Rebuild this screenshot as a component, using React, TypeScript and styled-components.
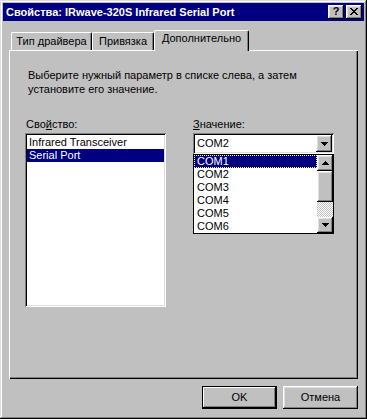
import React from "react";
import styled, { createGlobalStyle } from "styled-components";

const GlobalStyle = createGlobalStyle`
  html, body {
    margin: 0;
    padding: 0;
    background: #c0c0c0;
  }
  body {
    font-family: "Liberation Sans", Arial, sans-serif;
    font-size: 11px;
    color: #000;
  }
`;

const raised = `
  box-shadow: inset -1px -1px #000, inset 1px 1px #fff, inset -2px -2px #808080, inset 2px 2px #dfdfdf;
`;

const sunken = `
  box-shadow: inset 1px 1px #808080, inset -1px -1px #fff, inset 2px 2px #000, inset -2px -2px #dfdfdf;
`;

const Window = styled.div`
  width: 367px;
  height: 419px;
  box-sizing: border-box;
  padding: 3px;
  background: #c0c0c0;
  box-shadow: inset -1px -1px #000, inset 1px 1px #dfdfdf, inset -2px -2px #808080, inset 2px 2px #fff;
  display: flex;
  flex-direction: column;
`;

const TitleBar = styled.div`
  height: 18px;
  background: #000080;
  display: flex;
  align-items: center;
  padding: 0 2px 0 3px;
`;

const Title = styled.div`
  flex: 1;
  color: #fff;
  font-weight: bold;
  font-size: 11px;
  line-height: 13px;
  white-space: nowrap;
`;

const CaptionButton = styled.div<{ $gap?: number }>`
  width: 16px;
  height: 14px;
  box-sizing: border-box;
  background: #c0c0c0;
  ${raised}
  display: flex;
  align-items: center;
  justify-content: center;
  margin-left: ${(p) => p.$gap ?? 0}px;
  font-weight: bold;
  font-size: 11px;
  line-height: 11px;
  padding-bottom: 1px;
`;

const Content = styled.div`
  flex: 1;
  display: flex;
  flex-direction: column;
  padding: 9px 6px 0 6px;
`;

const Tabs = styled.div`
  height: 20px;
  display: flex;
  align-items: flex-start;
  padding-left: 2px;
`;

const Tab = styled.div<{ $active?: boolean; $w: number }>`
  box-sizing: border-box;
  width: ${(p) => p.$w}px;
  height: ${(p) => (p.$active ? 21 : 18)}px;
  margin-top: ${(p) => (p.$active ? 0 : 2)}px;
  padding-top: ${(p) => (p.$active ? 1 : 2)}px;
  background: #c0c0c0;
  border-top: 1px solid #fff;
  border-left: 1px solid #fff;
  border-right: 1px solid #000;
  border-radius: 2px 2px 0 0;
  box-shadow: inset -1px 0 #808080;
  text-align: center;
  line-height: 13px;
  position: relative;
  z-index: ${(p) => (p.$active ? 1 : 0)};
`;

const Panel = styled.div`
  height: 329px;
  box-sizing: border-box;
  background: #c0c0c0;
  box-shadow: inset 1px 1px #fff, inset -1px -1px #000, inset -2px -2px #808080;
  padding: 18px 16px 0 16px;
`;

const Description = styled.div`
  line-height: 14px;
  margin-left: 3px;
`;

const Columns = styled.div`
  display: flex;
  gap: 27px;
  margin-top: 22px;
`;

const Column = styled.div`
  width: 141px;
  display: flex;
  flex-direction: column;
`;

const Label = styled.div<{ $indent?: number }>`
  line-height: 13px;
  height: 13px;
  margin-left: ${(p) => p.$indent ?? 0}px;
  margin-bottom: 2px;
`;

const ListBox = styled.div`
  height: 174px;
  box-sizing: border-box;
  background: #fff;
  ${sunken}
  padding: 3px 2px 2px 2px;
`;

const ListItem = styled.div<{ $selected?: boolean; $focus?: boolean; $pad: number }>`
  height: 13px;
  line-height: 13px;
  box-sizing: border-box;
  padding-left: ${(p) => p.$pad}px;
  white-space: nowrap;
  background: ${(p) => (p.$selected ? "#000080" : "transparent")};
  color: ${(p) => (p.$selected ? "#fff" : "#000")};
  outline: ${(p) => (p.$focus ? "1px dotted #ffff80" : "none")};
  outline-offset: -1px;
`;

const ComboWrap = styled.div`
  position: relative;
`;

const Combo = styled.div`
  height: 21px;
  box-sizing: border-box;
  background: #fff;
  ${sunken}
  padding: 2px;
  display: flex;
  align-items: stretch;
`;

const ComboText = styled.div`
  flex: 1;
  padding: 2px 0 0 2px;
  line-height: 13px;
`;

const ArrowButton = styled.div<{ $h: number }>`
  width: 16px;
  height: ${(p) => p.$h}px;
  box-sizing: border-box;
  background: #c0c0c0;
  ${raised}
  display: flex;
  align-items: center;
  justify-content: center;
  flex-shrink: 0;
`;

const Dropdown = styled.div`
  position: absolute;
  left: 0;
  top: 21px;
  width: 141px;
  height: 80px;
  box-sizing: border-box;
  border: 1px solid #000;
  background: #fff;
  display: flex;
  z-index: 2;
`;

const DropItems = styled.div`
  flex: 1;
  display: flex;
  flex-direction: column;
`;

const ScrollBar = styled.div`
  width: 16px;
  display: flex;
  flex-direction: column;
`;

const Thumb = styled.div`
  height: 31px;
  background: #c0c0c0;
  ${raised}
`;

const Track = styled.div`
  flex: 1;
  background: repeating-conic-gradient(#c0c0c0 0% 25%, #fff 0% 50%) 0 0 / 2px 2px;
`;

const ButtonRow = styled.div`
  display: flex;
  justify-content: flex-end;
  gap: 6px;
  margin-top: 7px;
`;

const PushButton = styled.div<{ $default?: boolean }>`
  width: 75px;
  height: 23px;
  box-sizing: border-box;
  background: #c0c0c0;
  display: flex;
  align-items: center;
  justify-content: center;
  line-height: 13px;
  box-shadow: ${(p) =>
    p.$default
      ? "inset 0 0 0 1px #000, inset -2px -2px #000, inset 2px 2px #fff, inset -3px -3px #808080"
      : "inset -1px -1px #000, inset 1px 1px #fff, inset -2px -2px #808080, inset 2px 2px #dfdfdf"};
`;

const Arrow = ({ up }: { up?: boolean }) => (
  <svg width="7" height="4" viewBox="0 0 7 4" shapeRendering="crispEdges"
       style={up ? { transform: "scaleY(-1)" } : undefined}>
    <path d="M0 0h7v1h-1v1h-1v1h-1v1h-1v-1h-1v-1h-1v-1h-1z" fill="#000" />
  </svg>
);

const CloseGlyph = () => (
  <svg width="8" height="7" viewBox="0 0 8 7" shapeRendering="crispEdges">
    <path
      d="M0 0h2v1h-2zM6 0h2v1h-2zM1 1h2v1h-2zM5 1h2v1h-2zM2 2h4v1h-4zM3 3h2v1h-2zM2 4h4v1h-4zM1 5h2v1h-2zM5 5h2v1h-2zM0 6h2v1h-2zM6 6h2v1h-2z"
      fill="#000"
    />
  </svg>
);

const ports = ["COM1", "COM2", "COM3", "COM4", "COM5", "COM6"];

export default function App() {
  return (
    <>
      <GlobalStyle />
      <Window>
        <TitleBar>
          <Title>Свойства: IRwave-320S Infrared Serial Port</Title>
          <CaptionButton>?</CaptionButton>
          <CaptionButton $gap={2}>
            <CloseGlyph />
          </CaptionButton>
        </TitleBar>
        <Content>
          <Tabs>
            <Tab $w={81}>Тип драйвера</Tab>
            <Tab $w={62}>Привязка</Tab>
            <Tab $w={95} $active>Дополнительно</Tab>
          </Tabs>
          <Panel>
            <Description>
              Выберите нужный параметр в списке слева, а затем
              <br />
              установите его значение.
            </Description>
            <Columns>
              <Column>
                <Label $indent={1}>
                  Сво<u>й</u>ство:
                </Label>
                <ListBox>
                  <ListItem $pad={2}>Infrared Transceiver</ListItem>
                  <ListItem $pad={2} $selected>Serial Port</ListItem>
                </ListBox>
              </Column>
              <Column>
                <Label>
                  <u>З</u>начение:
                </Label>
                <ComboWrap>
                  <Combo>
                    <ComboText>COM2</ComboText>
                    <ArrowButton $h={17}>
                      <Arrow />
                    </ArrowButton>
                  </Combo>
                  <Dropdown>
                    <DropItems>
                      {ports.map((p, i) => (
                        <ListItem key={p} $pad={3} $selected={i === 0} $focus={i === 0}>
                          {p}
                        </ListItem>
                      ))}
                    </DropItems>
                    <ScrollBar>
                      <ArrowButton $h={16}>
                        <Arrow up />
                      </ArrowButton>
                      <Thumb />
                      <Track />
                      <ArrowButton $h={16}>
                        <Arrow />
                      </ArrowButton>
                    </ScrollBar>
                  </Dropdown>
                </ComboWrap>
              </Column>
            </Columns>
          </Panel>
          <ButtonRow>
            <PushButton $default>OK</PushButton>
            <PushButton>Отмена</PushButton>
          </ButtonRow>
        </Content>
      </Window>
    </>
  );
}
